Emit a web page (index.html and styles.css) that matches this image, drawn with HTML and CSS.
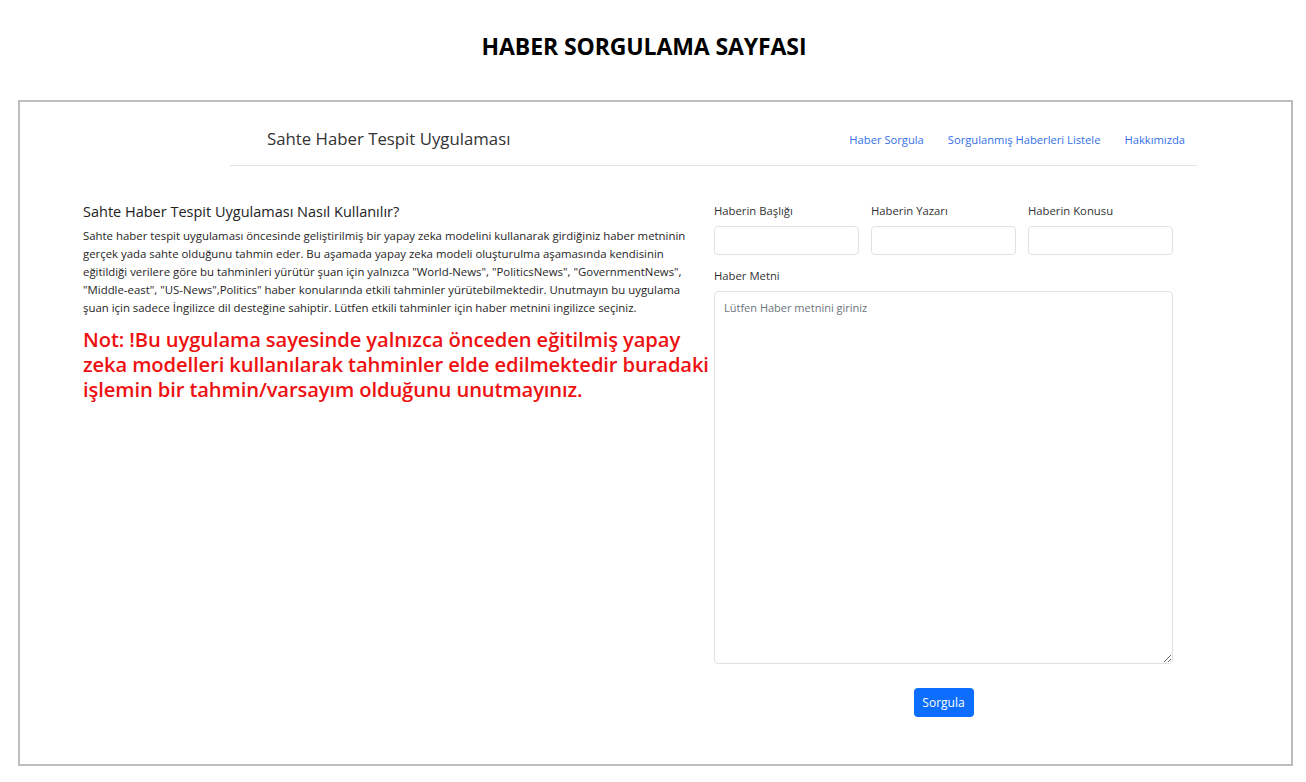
FILE: index.html
```html
<!DOCTYPE html>
<html lang="tr">
<head>
<meta charset="utf-8">
<title>Haber Sorgulama Sayfası</title>
<link rel="stylesheet" href="styles.css">
</head>
<body>
<h1 class="page-title">HABER SORGULAMA SAYFASI</h1>
<div class="frame">
  <nav class="navbar">
    <span class="brand">Sahte Haber Tespit Uygulaması</span>
    <ul class="nav-links">
      <li><a href="#">Haber Sorgula</a></li>
      <li><a href="#">Sorgulanmış Haberleri Listele</a></li>
      <li><a href="#">Hakkımızda</a></li>
    </ul>
  </nav>
  <div class="content">
    <section class="info">
      <h2 class="info-title">Sahte Haber Tespit Uygulaması Nasıl Kullanılır?</h2>
      <p class="info-text">Sahte haber tespit uygulaması öncesinde geliştirilmiş bir yapay zeka modelini kullanarak girdiğiniz haber metninin gerçek yada sahte olduğunu tahmin eder. Bu aşamada yapay zeka modeli oluşturulma aşamasında kendisinin eğitildiği verilere göre bu tahminleri yürütür şuan için yalnızca "World-News", "PoliticsNews", "GovernmentNews", "Middle-east", "US-News",Politics" haber konularında etkili tahminler yürütebilmektedir. Unutmayın bu uygulama şuan için sadece İngilizce dil desteğine sahiptir. Lütfen etkili tahminler için haber metnini ingilizce seçiniz.</p>
      <p class="note">Not: !Bu uygulama sayesinde yalnızca önceden eğitilmiş yapay zeka modelleri kullanılarak tahminler elde edilmektedir buradaki işlemin bir tahmin/varsayım olduğunu unutmayınız.</p>
    </section>
    <form class="query-form">
      <div class="field-row">
        <div class="field">
          <label class="label">Haberin Başlığı</label>
          <input class="input" type="text">
        </div>
        <div class="field">
          <label class="label">Haberin Yazarı</label>
          <input class="input" type="text">
        </div>
        <div class="field">
          <label class="label">Haberin Konusu</label>
          <input class="input" type="text">
        </div>
      </div>
      <label class="label label-text">Haber Metni</label>
      <textarea class="textarea" placeholder="Lütfen Haber metnini giriniz"></textarea>
      <div class="actions">
        <button type="button" class="btn">Sorgula</button>
      </div>
    </form>
  </div>
</div>
</body>
</html>
```
FILE: styles.css
```css
* { box-sizing: border-box; }
html, body { margin: 0; padding: 0; background: #fff; }
body {
  font-family: "Open Sans", "Noto Sans", "DejaVu Sans", sans-serif;
  color: #212529;
}
.page-title {
  margin: 0;
  height: 100px;
  padding: 30px 18px 0 0;
  text-align: center;
  font-family: "Open Sans", sans-serif;
  font-weight: 700;
  font-size: 23px;
  line-height: 32px;
  color: #000;
  letter-spacing: -0.1px;
}
.frame {
  margin: 0 13px 0 18px;
  height: 666px;
  border: 2px solid #bdbdbd;
}
.navbar {
  margin-left: 210px;
  width: 967px;
  height: 64px;
  border-bottom: 1px solid #e3e3e3;
  display: flex;
  align-items: center;
  padding: 9px 12px 0 37px;
}
.brand {
  font-size: 16.8px;
  color: #333;
  flex: 1;
}
.nav-links {
  list-style: none;
  margin: 0;
  padding: 0;
  display: flex;
  gap: 24px;
}
.nav-links a {
  color: #3370e8;
  text-decoration: none;
  font-size: 11.2px;
}
.content {
  display: flex;
  padding: 36px 0 0 63px;
}
.info {
  width: 631px;
}
.info-text {
  width: 625px;
}
.info-title {
  margin: 0 0 5px;
  font-size: 14.5px;
  font-weight: 500;
  line-height: 20px;
  color: #222;
}
.info-text {
  margin: 0;
  font-size: 11.4px;
  line-height: 18px;
  color: #262626;
}
.note {
  margin: 10px 0 0;
  font-size: 20.2px;
  font-weight: 600;
  line-height: 25px;
  letter-spacing: -0.12px;
  color: #ee1111;
}
.query-form {
  margin-left: 0;
  width: 459px;
  display: flex;
  flex-direction: column;
  padding-top: 1px;
}
.field-row {
  display: flex;
  gap: 12px;
}
.field {
  flex: 1;
  min-width: 0;
  display: flex;
  flex-direction: column;
}
.label {
  font-size: 11.3px;
  line-height: 16px;
  color: #333;
  margin-bottom: 7px;
}
.input {
  width: 100%;
  height: 29px;
  border: 1px solid #dee2e6;
  border-radius: 4px;
  font: inherit;
}
.label-text {
  margin-top: 13px;
  margin-bottom: 7px;
}
.textarea {
  height: 373px;
  border: 1px solid #dee2e6;
  border-radius: 4px;
  padding: 8px 9px;
  font-family: inherit;
  font-size: 11px;
  resize: vertical;
}
.textarea::placeholder { color: #6c757d; }
.actions {
  display: flex;
  justify-content: center;
  margin-top: 24px;
}
.btn {
  background: #0d6efd;
  color: #fff;
  border: none;
  border-radius: 4px;
  font-family: inherit;
  font-size: 12px;
  height: 29px;
  width: 60px;
  padding: 0;
}
```
